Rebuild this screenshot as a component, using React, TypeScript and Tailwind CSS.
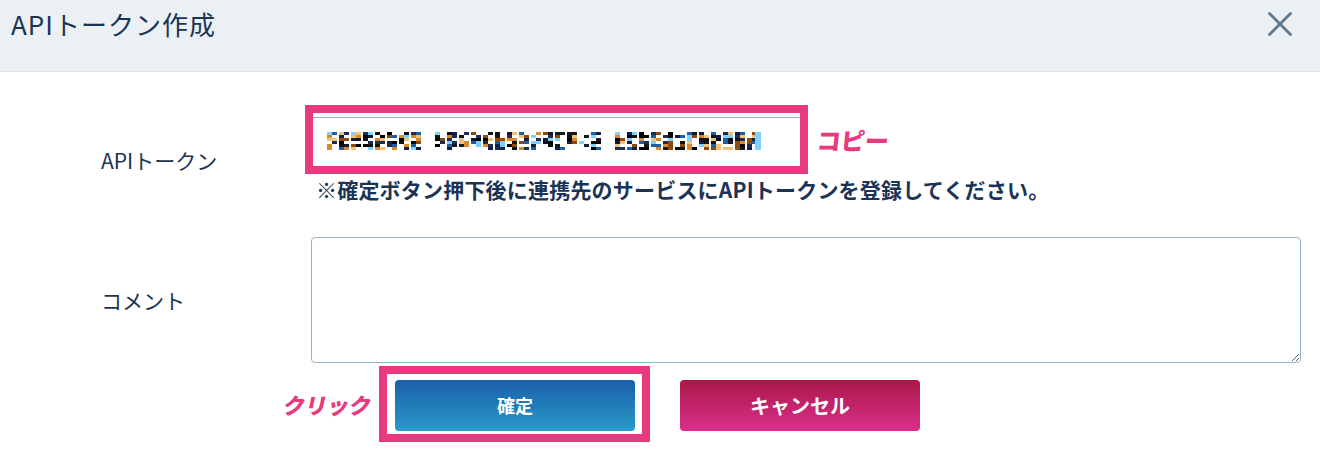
import { useMemo } from "react"

const FONT = "font-['Noto_Sans_CJK_JP','Noto_Sans',sans-serif]"

// pixelated (masked) token — deterministic mosaic blocks
function TokenMosaic() {
  const rects = useMemo(() => {
    let seed = 1234567
    const rand = () => {
      seed = (seed * 1103515245 + 12345) % 2147483648
      return seed / 2147483648
    }
    const palette = ["#111827", "#0f1f45", "#1c2c55", "#d98a2c", "#8a4a12", "#7fd0ff", "#f3c27a", "#1f5fa0", "#000000", "#111111"]
    const spaces = new Set([8, 23])
    const out: { x: number; y: number; w: number; c: string }[] = []
    const chars = 36
    for (let i = 0; i < chars; i++) {
      if (spaces.has(i)) continue
      const x0 = i * 12
      for (let cx = 0; cx < 2; cx++) {
        for (let cy = 0; cy < 6; cy++) {
          const r = rand()
          if (r < 0.3) continue
          const c = palette[Math.floor(rand() * palette.length)]
          out.push({ x: x0 + cx * 5, y: cy * 3, w: 5, c })
        }
      }
    }
    return out
  }, [])
  return (
    <svg width="434" height="18" viewBox="0 0 434 18" className="block">
      {rects.map((r, i) => (
        <rect key={i} x={r.x} y={r.y} width={r.w} height="3" fill={r.c} />
      ))}
      <rect x="428" y="0" width="6" height="18" fill="#7fd0ff" />
    </svg>
  )
}

export default function App() {
  return (
    <div className={`h-[473px] w-[1320px] overflow-hidden bg-white ${FONT}`}>
      {/* header */}
      <div className="flex h-[72px] items-start justify-between border-b border-[#dde3e8] bg-[#ebf0f5] pl-[11px] pr-[28px]">
        <h1 className="pt-[5px] text-[26px] leading-[38px] tracking-[1px] text-[#1b3454]">APIトークン作成</h1>
        <svg width="24" height="24" viewBox="0 0 24 24" className="mt-[12px]" stroke="#5f7a90" strokeWidth="2.8" strokeLinecap="round">
          <line x1="1.5" y1="1.5" x2="22.5" y2="22.5" />
          <line x1="22.5" y1="1.5" x2="1.5" y2="22.5" />
        </svg>
      </div>

      {/* token row */}
      <div className="mt-[33px] flex">
        <div className="w-[305px] shrink-0 pl-[101px] pt-[40px] text-[21px] leading-[30px] text-[#1b3454]">APIトークン</div>
        <div>
          <div className="flex items-center gap-[9px]">
            <div className="h-[69px] w-[503px] border-[8px] border-[#e9397f] bg-white">
              <div className="mt-[4px] border-t border-[#9fb3c4] pl-[14px] pt-[14px]">
                <TokenMosaic />
              </div>
            </div>
            <span className="-skew-x-6 text-[24px] font-black leading-none text-[#e9397f]">コピー</span>
          </div>
          <p className="ml-[11px] text-[21px] font-bold leading-[30px] tracking-[0.2px] text-[#1a3356]">
            ※確定ボタン押下後に連携先のサービスにAPIトークンを登録してください。
          </p>
        </div>
      </div>

      {/* comment row */}
      <div className="mt-[33px] flex items-center">
        <div className="w-[305px] shrink-0 pl-[101px] text-[21px] leading-[30px] text-[#1b3454]">コメント</div>
        <textarea className="ml-[6px] h-[126px] w-[990px] rounded-[4px] border border-[#9ab5cb] bg-white outline-none" />
      </div>

      {/* buttons */}
      <div className="mt-[3px] flex items-start pl-[284px]">
        <span className="mt-[24px] -skew-x-12 text-[22px] font-black leading-[28px] text-[#e9397f]">クリック</span>
        <div className="ml-[7px] h-[76px] w-[271px] border-[8px] border-[#e9397f] pl-[8px] pt-[6px]">
          <button className="h-[51px] w-[240px] rounded-[4px] bg-gradient-to-b from-[#1b5fa8] to-[#2b9bca] text-[18px] font-bold text-white">
            確定
          </button>
        </div>
        <button className="ml-[30px] mt-[14px] h-[51px] w-[240px] rounded-[4px] bg-gradient-to-b from-[#ab1748] to-[#da2e8c] text-[20px] font-bold text-white">
          キャンセル
        </button>
      </div>
    </div>
  )
}
